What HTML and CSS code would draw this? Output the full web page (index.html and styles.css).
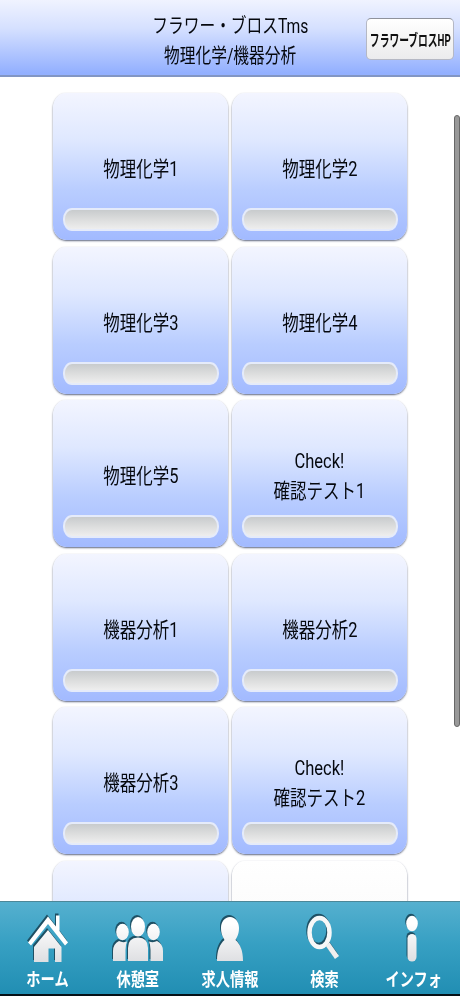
FILE: index.html
```html
<!DOCTYPE html>
<html lang="ja">
<head>
<meta charset="utf-8">
<title>フラワー・ブロスTms</title>
<link rel="stylesheet" href="styles.css">
</head>
<body>
<header class="header">
  <h1 class="title"><span>フラワー・ブロスTms</span><span>物理化学/機器分析</span></h1>
  <button class="hp"><span>フラワーブロスHP</span></button>
</header>
<main class="content">
  <div class="grid">
    <a class="tile"><span class="label">物理化学1</span><i class="bar"></i></a>
    <a class="tile"><span class="label">物理化学2</span><i class="bar"></i></a>
    <a class="tile"><span class="label">物理化学3</span><i class="bar"></i></a>
    <a class="tile"><span class="label">物理化学4</span><i class="bar"></i></a>
    <a class="tile"><span class="label">物理化学5</span><i class="bar"></i></a>
    <a class="tile"><span class="label">Check!<br>確認テスト1</span><i class="bar"></i></a>
    <a class="tile"><span class="label">機器分析1</span><i class="bar"></i></a>
    <a class="tile"><span class="label">機器分析2</span><i class="bar"></i></a>
    <a class="tile"><span class="label">機器分析3</span><i class="bar"></i></a>
    <a class="tile"><span class="label">Check!<br>確認テスト2</span><i class="bar"></i></a>
    <a class="tile"></a>
    <a class="tile blank"></a>
  </div>
  <div class="scrollbar"></div>
</main>
<nav class="nav">
  <svg class="defs" width="0" height="0"><defs><linearGradient id="g" gradientUnits="userSpaceOnUse" x1="0" y1="0" x2="0" y2="50"><stop offset=".2" stop-color="#fff"/><stop offset="1" stop-color="#dcdde0"/></linearGradient></defs></svg>
  <a class="item home"><svg class="icon" width="56" height="50" viewBox="0 0 56 50"><path fill="url(#g)" d="M28 16L41.500 33V48H35V34.500H28.500V48H14V33Z"/><path fill="#fff" d="M28 2.500L36 12.500V1.500H39.500V17L48 28.500L45 31.500L28 10L11 31.500L8 28.500Z"/></svg><span>ホーム</span></a>
  <a class="item lounge"><svg class="icon" width="56" height="50" viewBox="0 0 56 50"><g fill="url(#g)"><ellipse cx="12.500" cy="18" rx="6.300" ry="8.300"/><ellipse cx="43.500" cy="18" rx="6.300" ry="8.300"/><path d="M3 47V37Q3 30 9 27Q12.500 29 17 27.500Q15.500 31 15.500 36V47Z"/><path d="M53 47V37Q53 30 47 27Q43.500 29 39 27.500Q40.500 31 40.500 36V47Z"/><ellipse cx="28" cy="12.800" rx="7" ry="9.800"/><path d="M18 47V34Q18 23.500 28 23.500Q38 23.500 38 34V47Z"/></g></svg><span>休憩室</span></a>
  <a class="item jobs"><svg class="icon" width="56" height="50" viewBox="0 0 56 50"><path fill="url(#g)" d="M28 3C33.500 3 37 8 37 14C37 20 35 23 33.500 26C38 30 41 36 41 47H15C15 36 18 30 22.500 26C21 23 19 20 19 14C19 8 22.500 3 28 3Z"/></svg><span>求人情報</span></a>
  <a class="item search"><svg class="icon" width="56" height="50" viewBox="0 0 56 50"><ellipse cx="22.500" cy="18.500" rx="10" ry="14.500" fill="none" stroke="#f7f8f8" stroke-width="4.500"/><path d="M30.500 30L40 43.500" fill="none" stroke="#efefef" stroke-width="5"/></svg><span>検索</span></a>
  <a class="item info"><svg class="icon" width="56" height="50" viewBox="0 0 56 50"><g fill="url(#g)"><ellipse cx="26" cy="9.500" rx="5.800" ry="7.800"/><rect x="21.500" y="20" width="9" height="27.500" rx="4.500"/></g></svg><span>インフォ</span></a>
</nav>
</body>
</html>
```
FILE: styles.css
```css
* { box-sizing: border-box; }
body {
  margin: 0;
  width: 460px;
  height: 996px;
  display: flex;
  flex-direction: column;
  overflow: hidden;
  background: #fff;
  color: #05080e;
  font-family: Roboto, "Noto Sans CJK JP", sans-serif;
}
.header {
  flex: none;
  height: 77px;
  display: grid;
  grid-template-columns: 94px 1fr 94px;
  background: linear-gradient(#f0f3ff, #d5e0ff 38%, #93b0ff 97%);
  border-bottom: 2px solid #8296c4;
}
.title {
  grid-column: 2;
  margin: 0;
  padding-top: 11px;
  display: flex;
  flex-direction: column;
  align-items: center;
  font-size: 20px;
  font-weight: 400;
  line-height: 30px;
  white-space: nowrap;
}
.title span { transform: scaleX(.785); }
.hp {
  width: 88px;
  height: 42px;
  margin: 18px 0 0;
  padding: 0;
  display: flex;
  align-items: center;
  justify-content: center;
  border: 1px solid #b5b8c4;
  border-top-color: #8f929c;
  border-radius: 5px;
  background: linear-gradient(#fff, #f6f6f6 45%, #ebebed);
  color: #111;
  font: 700 16px Roboto, "Noto Sans CJK JP", sans-serif;
  white-space: nowrap;
}
.hp span { flex: none; transform: scaleX(.61); }
.content {
  flex: 1;
  min-height: 0;
  display: flex;
  justify-content: space-between;
  overflow: hidden;
}
.grid {
  margin: 16px 0 0 53px;
  display: grid;
  grid-template-columns: 175px 175px;
  grid-auto-rows: 147px;
  gap: 6.600px 4px;
}
.tile {
  display: flex;
  flex-direction: column;
  align-items: center;
  justify-content: flex-end;
  padding-bottom: 9px;
  border-radius: 13px / 15px;
  background: linear-gradient(#f3f5ff, #dfe8ff 32%, #b9cdff 66%, #a2baff);
  box-shadow: 0 1px 2px #606880;
}
.tile.blank { background: linear-gradient(#fff, #f5f5f5); }
.label {
  flex: 1;
  margin-bottom: -31px;
  padding-top: 6px;
  display: block;
  align-content: center;
  text-align: center;
  font-size: 21px;
  line-height: 30px;
  white-space: nowrap;
  transform: scaleX(.785);
}
.bar {
  flex: none;
  width: 156px;
  height: 23px;
  border: 2px solid #e5ebfa;
  border-radius: 9px / 11px;
  background: linear-gradient(#c8cbcd, #dcdddd 50%, #eeeeee);
}
.scrollbar {
  flex: none;
  width: 6px;
  height: 612px;
  margin-top: 38px;
  border: 1px solid #686868;
  border-radius: 3px;
  background: #999;
}
.nav {
  flex: none;
  height: 95px;
  display: flex;
  border-top: 1px solid #4c8798;
  border-bottom: 2px solid #061016;
  background: linear-gradient(#55b0cf, #37a0c3 45%, #218eb3);
}
.defs { position: absolute; }
.item {
  width: 92px;
  padding-top: 12px;
  display: flex;
  flex-direction: column;
  align-items: center;
  color: #fff;
  font-size: 18.500px;
  font-weight: 700;
  line-height: 30px;
  white-space: nowrap;
}
.item span { margin-top: 1px; transform: scaleX(.77); }
.icon { flex: none; filter: drop-shadow(-1px -1.500px 0 #1e5064); }
.home { padding-left: 3px; }
.search { padding-left: 5px; }
```
